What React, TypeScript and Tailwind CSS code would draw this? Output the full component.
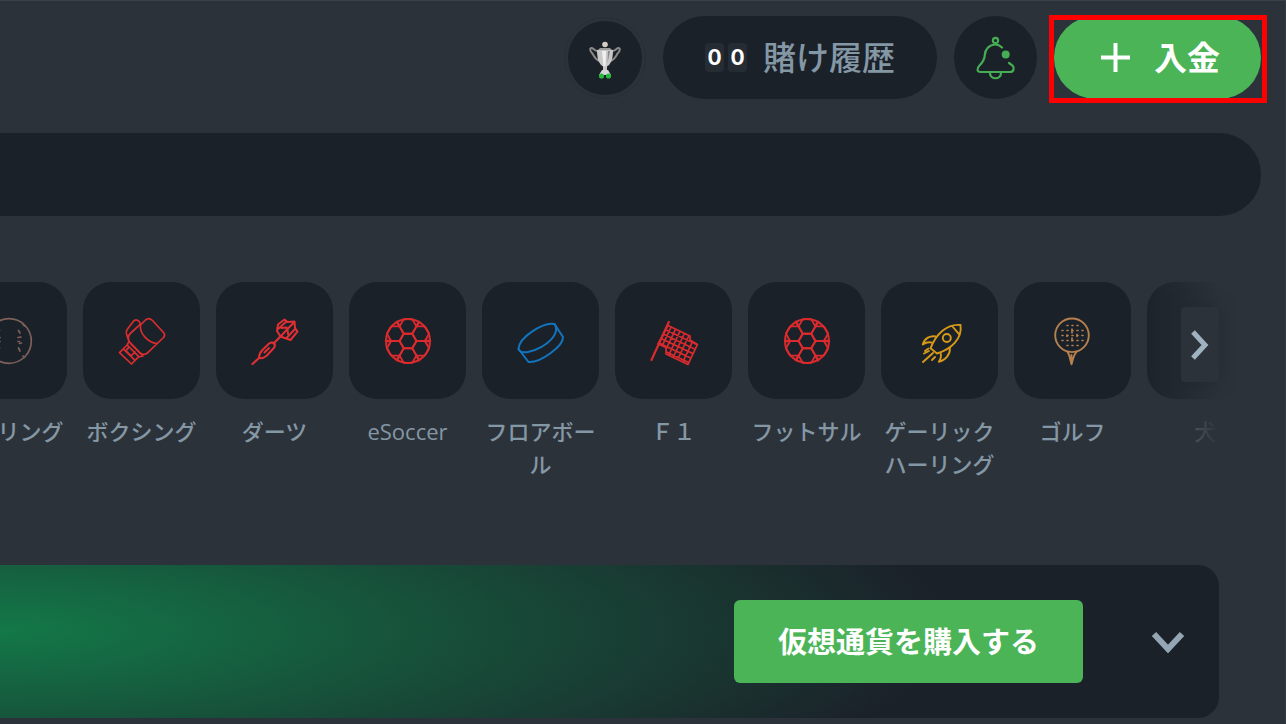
import type { ReactNode } from "react";

const HEX_CENTERS = [
  [24, 24],
  [24, 9.4],
  [24, 38.6],
  [11.3, 16.7],
  [36.7, 16.7],
  [11.3, 31.3],
  [36.7, 31.3],
];

function hexPath(cx: number, cy: number) {
  return `M${cx - 8.4} ${cy}L${cx - 4.2} ${cy - 7.3}H${cx + 4.2}L${cx + 8.4} ${cy}L${cx + 4.2} ${cy + 7.3}H${cx - 4.2}Z`;
}

function Icon({ color, children }: { color: string; children: ReactNode }) {
  return (
    <svg
      viewBox="0 0 48 48"
      className="size-12 overflow-visible"
      fill="none"
      stroke={color}
      strokeWidth="1.7"
      strokeLinejoin="round"
      strokeLinecap="round"
      aria-hidden="true"
    >
      {children}
    </svg>
  );
}

function BaseballIcon() {
  return (
    <Icon color="#7d6059">
      <circle cx="24" cy="24" r="22.3" />
      <path d="M33.500 13.500l1.500 2.500M36 20l-3 .5M33 24.500h1.500M36.500 26l-2 .5M33.500 31l1.500 3M38 7.500l1.500 1.500M38 39l1.500 1.500" />
      <path d="M14.500 13.500 13 16M12 20l3 .5M15 24.500h-1.500M11.500 26l2 .5M14.500 31 13 34M10 7.500 8.500 9M10 39l-1.500 1.500" />
    </Icon>
  );
}

function BoxingIcon() {
  return (
    <Icon color="#d92d2f">
      <path d="M1.5 35.7 9.2 28l11.6 11.7L13.5 47ZM5.3 32l11.8 11.4M11 30.2l-3.2 3.4 5.2 5.2 4-3.8M9.2 28l1.8-3.6L25 39l-4.2 1" />
      <path d="M11 24.4 8.500 17c-.6-2-.4-3.400.8-4.700L15.500 4.200c2.500-2.600 6-.7 7 3L13.300 15.500c-2.400 2-3.600 5.500-2.300 8.900" />
      <path d="M13 27 22 36c2 1.600 5 1.700 7 .3L45.500 20.500c1.500-1.600 1.500-3 .2-4.700L34.500 3.500c-2.200-2.200-5-2.300-7-.5L22.500 8c-1.200 8 7 17.500 16.500 18.500" />
    </Icon>
  );
}

function DartIcon() {
  return (
    <Icon color="#e03033">
      <path strokeWidth="2.200" d="M1.500 47 8 41M22.500 26.500 30 19" />
      <path
        strokeWidth="2"
        d="M8 41c0-3 1-5.500 3.200-7.700l6.600-6.500c2-1.500 4-1.500 5.500-.6.900 1.500.8 3.300-.7 5l-7 7.500C13.500 40.500 11 41.500 8 41ZM13.500 35.500l4.500-4.500"
      />
      <path
        strokeWidth="2"
        d="M29.500 19.500 26 14l1-6.500 6.500-5 3 2.500 7-.5.5 6.500 2.500 3.500-7 8.500ZM29.500 19.500 36.500 12l7-7M27 12l8.500-7.500M35 21.500l9.500-10M30.500 11l5-.5M36.500 12l.5 5"
      />
    </Icon>
  );
}

function SoccerIcon() {
  return (
    <Icon color="#da2b2e">
      <circle cx="24" cy="24" r="22" strokeWidth="2" />
      {HEX_CENTERS.map(([x, y]) => (
        <path key={`${x}-${y}`} d={hexPath(x, y)} strokeWidth="1.900" />
      ))}
      <path
        strokeWidth="2.500"
        d="M7 24H2M41 24h5M15.600 9.400l-2.600-4.500M32.400 9.400 35 4.900M15.600 38.600 13 43.100M32.400 38.600l2.600 4.500"
      />
    </Icon>
  );
}

function PuckIcon() {
  return (
    <Icon color="#1274bd">
      <g strokeWidth="2">
        <path d="M1.500 32C1.800 20 27 4.500 37.500 7l8.500 13C46.500 29 23.500 46 11.500 45Z" />
        <path d="M1.500 32c2 5.500 13.500 3.500 22.500-1.800C34 24.500 43 15 37.500 7" />
      </g>
    </Icon>
  );
}

function FlagIcon() {
  return (
    <Icon color="#d92b2e">
      <clipPath id="flag-cloth">
        <path d="M18 8.500 40 19v4l7.500 4.500L38 47.500 16 37v-6.500L8 27Z" />
      </clipPath>
      <path strokeWidth="2.200" d="M18.800 5 1.500 43" />
      <path d="M18 8.500 40 19v4l7.500 4.500L38 47.500 16 37v-6.500L8 27Z" />
      <g clipPath="url(#flag-cloth)">
        <path d="M14 12l40 19M12 16.500l40 19M10 21l40 19M8 25.500l40 19M6 30l40 19M4 34.500l40 19M23 6 5 44M28 7 10 45M33 8 15 46M38 9 20 47M43 10 25 48M48 13 30 51M53 16 35 54" />
      </g>
    </Icon>
  );
}

function RocketIcon() {
  return (
    <Icon color="#d69a18">
      <g strokeWidth="1.900">
        <path d="M44.500 8C31 6.500 20 17 14.500 31.300l6.500 5.200C35 32 46.500 22 44.500 8ZM36.500 9.500l6.500 7.700" />
        <circle cx="30.800" cy="21" r="4" />
        <path d="M19.500 19.500c-5-1-11 1.500-12.700 8 3-2.200 6.500-2.600 9.500-1.800M33.800 31c.8 6-4.300 12.500-11 13.700 2.200-3 2.700-6 1.700-9" />
        <path d="M13 34 8 36.500M17 36 7 45M19 40l-3 3M12.500 31.500 9 34" />
      </g>
    </Icon>
  );
}

function GolfIcon() {
  return (
    <Icon color="#b5804d">
      <circle cx="23" cy="18.300" r="16.800" strokeWidth="1.900" />
      <path strokeWidth="1.900" d="M18.500 35c2 2 2.500 7 4 12.300 1.500-5.300 2.500-10.300 5-12.300M22.500 38v5" />
      <path
        strokeWidth="1.600"
        strokeDasharray="1 4"
        d="M18 8.500h12M13 13.500h22M13 18.500h22M13 23.500h22M18 28.500h12"
      />
      <path strokeWidth="1.600" d="M23 12v4M23 21v3M28 17.500v2M18 18v1.500" />
    </Icon>
  );
}

function DogIcon() {
  return (
    <Icon color="#d69a18">
      <path d="M0 6 12 6l10 8 18 4 4 8-8 3-4 14M0 19h8l5 12-3 11M0 26h6" />
    </Icon>
  );
}

function TrophyIcon() {
  return (
    <svg viewBox="0 0 34 40" className="h-10 w-[34px]" aria-hidden="true">
      <g fill="none" stroke="#8c8a88" strokeWidth="2">
        <path d="M10 11C6.500 11 5.500 8 3.500 8S2 11 4 13s2 6 7.500 8M24 11c3.500 0 4.500-3 6.500-3s1.500 3-.5 5-2 6-7.500 8" />
      </g>
      <circle cx="17" cy="4.500" r="2.800" fill="#d5cdc2" />
      <path fill="#9a9a9a" d="M12 8h10l2 2H10Z" />
      <path fill="#c9c9c9" d="M9 10h16c0 9-2 14-6 16.500V30h-4v-3.500C11 24 9 19 9 10Z" />
      <path fill="#f0f0f0" d="M14 11h4l-.5 15h-2Z" />
      <path fill="#888888" d="M20 11h2l-2.500 12Z" />
      <path fill="#d6d6d6" d="M14 30h6l3 5H11Z" />
      <circle cx="13.500" cy="36" r="2.600" fill="#27ba3d" />
      <circle cx="20.500" cy="36" r="2.600" fill="#27ba3d" />
    </svg>
  );
}

function BellIcon() {
  return (
    <svg
      viewBox="0 0 42 42"
      className="size-[42px] overflow-visible"
      fill="none"
      stroke="#46ad54"
      strokeWidth="2.200"
      strokeLinecap="round"
      aria-hidden="true"
    >
      <circle cx="20.500" cy="3.500" r="2.600" />
      <path d="M27 10.500C25 8.500 23 7.500 20.500 7.500 14 7.500 10 12.500 9.800 18c-.2 5-2.300 7.500-5.300 10.500-3 3-2.500 6.500 1 6.500h29.500c3.500 0 5-3.800 2.500-6.500L34 26" />
      <path d="M15 36c0 7 11 7 11 0" />
      <circle cx="30.700" cy="17.500" r="4" fill="#46ad54" stroke="none" />
    </svg>
  );
}

const sports = [
  { label: "ボウリング", icon: <BaseballIcon /> },
  { label: "ボクシング", icon: <BoxingIcon /> },
  { label: "ダーツ", icon: <DartIcon /> },
  { label: "eSoccer", icon: <SoccerIcon /> },
  { label: "フロアボール", icon: <PuckIcon /> },
  { label: "Ｆ１", icon: <FlagIcon /> },
  { label: "フットサル", icon: <SoccerIcon /> },
  { label: "ゲーリックハーリング", icon: <RocketIcon /> },
  { label: "ゴルフ", icon: <GolfIcon /> },
  { label: "犬", icon: <DogIcon /> },
];

function Header() {
  return (
    <header className="flex items-center justify-end gap-[17px] pr-6">
      <button
        aria-label="トロフィー"
        className="flex size-[82px] items-center justify-center rounded-full border border-[#282e37]"
      >
        <span className="flex size-[74px] items-center justify-center rounded-full bg-[#1b2129] pt-1">
          <TrophyIcon />
        </span>
      </button>

      <button className="flex h-[83px] items-center gap-4 rounded-full bg-[#1b2129] px-[42px] text-[33px] font-medium text-[#8497a5]">
        <span className="flex gap-1 font-['Inter'] text-[21px] font-bold text-white">
          <span className="flex h-[29px] w-[19px] items-center justify-center rounded-sm bg-[#262c34]">0</span>
          <span className="flex h-[29px] w-[19px] items-center justify-center rounded-sm bg-[#262c34]">0</span>
        </span>
        賭け履歴
      </button>

      <button
        aria-label="通知"
        className="flex size-[83px] items-center justify-center rounded-full bg-[#1b2129]"
      >
        <BellIcon />
      </button>

      {/* Deposit button with its highlight frame */}
      <div className="relative">
        <button className="flex h-[83px] items-center gap-6 rounded-full bg-[#4ab457] pr-[41px] pl-[47px] text-[33px] font-bold text-white">
          <svg viewBox="0 0 29 29" className="size-[29px]" stroke="currentColor" strokeWidth="4" aria-hidden="true">
            <path d="M14.500 0v29M0 14.500h29" />
          </svg>
          入金
        </button>
        <div className="pointer-events-none absolute -top-px -right-1.5 -bottom-1 -left-[5px] border-5 border-[#ff0000]" />
      </div>
    </header>
  );
}

function SportList() {
  return (
    <nav className="relative mt-[66px] mr-[66px]">
      <div className="overflow-hidden">
        <ul className="-ml-[50px] flex gap-4">
          {sports.map((s) => (
            <li key={s.label} className="w-[117px] shrink-0">
              <a href="#" className="flex flex-col items-center gap-4 text-center">
                <span className="flex size-[117px] items-center justify-center rounded-[28px] bg-[#1b2129]">
                  {s.icon}
                </span>
                <span className="text-[22px] leading-[33px] font-medium text-[#8497a5]">{s.label}</span>
              </a>
            </li>
          ))}
        </ul>
      </div>
      <div className="pointer-events-none absolute inset-y-0 right-0 w-20 bg-linear-to-r from-transparent to-[#2c323a]" />
      <button
        aria-label="次へ"
        className="absolute top-[25px] right-0 flex h-[75px] w-[38px] items-center justify-center rounded-sm bg-[#2c323a] shadow-[0_0_16px_rgba(27,33,41,0.5)]"
      >
        <svg viewBox="0 0 18 30" className="h-[30px] w-[18px]" fill="none" stroke="#9fb2bf" strokeWidth="5" aria-hidden="true">
          <path d="M2 2l12 13L2 28" />
        </svg>
      </button>
    </nav>
  );
}

function Banner() {
  return (
    <section className="mt-[84px] mr-[66px] flex h-[153px] items-center justify-end gap-[52px] rounded-r-[21px] bg-[#1b2129] bg-[radial-gradient(950px_220px_at_0_65px,#137848,#1b2129)] pr-[18px]">
      <button className="h-[83px] rounded-md bg-[#4ab457] px-11 text-[29px] font-bold text-white">
        仮想通貨を購入する
      </button>
      <button aria-label="開く" className="flex size-[66px] items-center justify-center">
        <svg viewBox="0 0 32 22" className="h-[22px] w-8" fill="none" stroke="#94a6b3" strokeWidth="6" aria-hidden="true">
          <path d="M2 3l14 15L30 3" />
        </svg>
      </button>
    </section>
  );
}

export default function App() {
  return (
    <div className="min-h-screen overflow-hidden border-t border-r border-t-[#3b4148] border-r-[#343a42] bg-[#2c323a] pt-[15px] pb-1.5 font-['Open_Sans','Noto_Sans_CJK_JP',sans-serif]">
      <Header />
      <input
        type="search"
        aria-label="検索"
        className="mt-[34px] -ml-12 block h-[83px] w-[calc(100%+24px)] rounded-full bg-[#1b2129] px-20 text-white outline-none"
      />
      <SportList />
      <Banner />
    </div>
  );
}
